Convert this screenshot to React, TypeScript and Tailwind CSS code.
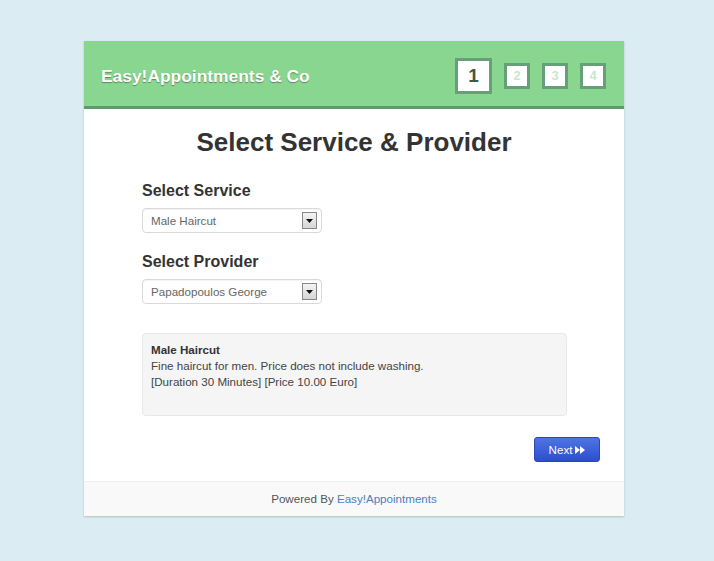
const steps = [1, 2, 3, 4];

const SelectBox = ({ value }: { value: string }) => (
  <div className="flex h-[25px] w-[180px] items-center justify-between rounded-[4px] border border-[#d9d9d9] bg-white pl-[8px] pr-[4px] shadow-[inset_0_1px_1px_rgba(0,0,0,0.05)]">
    <span className="text-[11.6px] text-[#666]">{value}</span>
    <span className="flex h-[17px] w-[15px] items-center justify-center border border-[#888] bg-gradient-to-b from-[#f4f4f4] to-[#d6d6d6]">
      <svg width="7" height="4" viewBox="0 0 7 4">
        <path d="M0 0h7L3.5 4z" fill="#111" />
      </svg>
    </span>
  </div>
);

export default function App() {
  return (
    <div
      className="min-h-[561px] bg-[#dbedf3] pt-[41px]"
      style={{ fontFamily: '"Liberation Sans", Arial, sans-serif' }}
    >
      <div className="ml-[84px] w-[540px] bg-white shadow-[0_1px_2px_rgba(0,0,0,0.2)]">
        <div className="flex h-[68px] items-center justify-between border-b-[3px] border-[#5f9b6d] bg-[#88d68f] pl-[17px] pr-[18px] pt-[5px]">
          <h1 className="text-[17.4px] font-bold text-white [text-shadow:0_1px_1px_rgba(0,0,0,0.35)]">
            Easy!Appointments &amp; Co
          </h1>
          <div className="flex items-center gap-[12px]">
            {steps.map((s) =>
              s === 1 ? (
                <div
                  key={s}
                  className="flex h-[36px] w-[37px] items-center justify-center border-[3px] border-[#679f78] bg-white text-[19px] font-bold text-[#3f5a3f]"
                >
                  {s}
                </div>
              ) : (
                <div
                  key={s}
                  className="flex h-[26px] w-[26px] items-center justify-center border-[3px] border-[#679f78] bg-white text-[13px] font-bold text-[#c9e6cb]"
                >
                  {s}
                </div>
              )
            )}
          </div>
        </div>

        <div className="px-[58px] pb-[19px] pt-[18px]">
          <h2 className="text-center text-[26px] font-bold leading-[30px] text-[#333]">
            Select Service &amp; Provider
          </h2>

          <h3 className="mt-[22px] text-[16px] font-bold text-[#333]">Select Service</h3>
          <div className="mt-[5px]">
            <SelectBox value="Male Haircut" />
          </div>

          <h3 className="mt-[17px] text-[16px] font-bold text-[#333]">Select Provider</h3>
          <div className="mt-[5px]">
            <SelectBox value="Papadopoulos George" />
          </div>

          <div className="mt-[29px] h-[83px] w-[425px] rounded-[4px] border border-[#e8e8e8] bg-[#f5f5f5] px-[8px] pt-[8px] text-[11.6px] leading-[16px] text-[#444]">
            <div className="font-bold text-[#333]">Male Haircut</div>
            <div>Fine haircut for men. Price does not include washing.</div>
            <div>[Duration 30 Minutes] [Price 10.00 Euro]</div>
          </div>

          <div className="mt-[21px] flex justify-end">
            <button className="-mr-[34px] flex h-[25px] w-[66px] items-center justify-center gap-[3px] rounded-[3px] border border-[#2a46b8] bg-gradient-to-b from-[#4f74e3] to-[#2c4ecf] text-[11.6px] text-white">
              Next
              <svg width="10" height="8" viewBox="0 0 10 8">
                <path d="M0 0l5 4-5 4zM5 0l5 4-5 4z" fill="#fff" />
              </svg>
            </button>
          </div>
        </div>

        <div className="flex h-[35px] items-center justify-center border-t border-[#eee] bg-[#f9f9f9] text-[11.6px] text-[#555]">
          Powered By&nbsp;<span className="text-[#4d7fc0]">Easy!Appointments</span>
        </div>
      </div>
    </div>
  );
}
